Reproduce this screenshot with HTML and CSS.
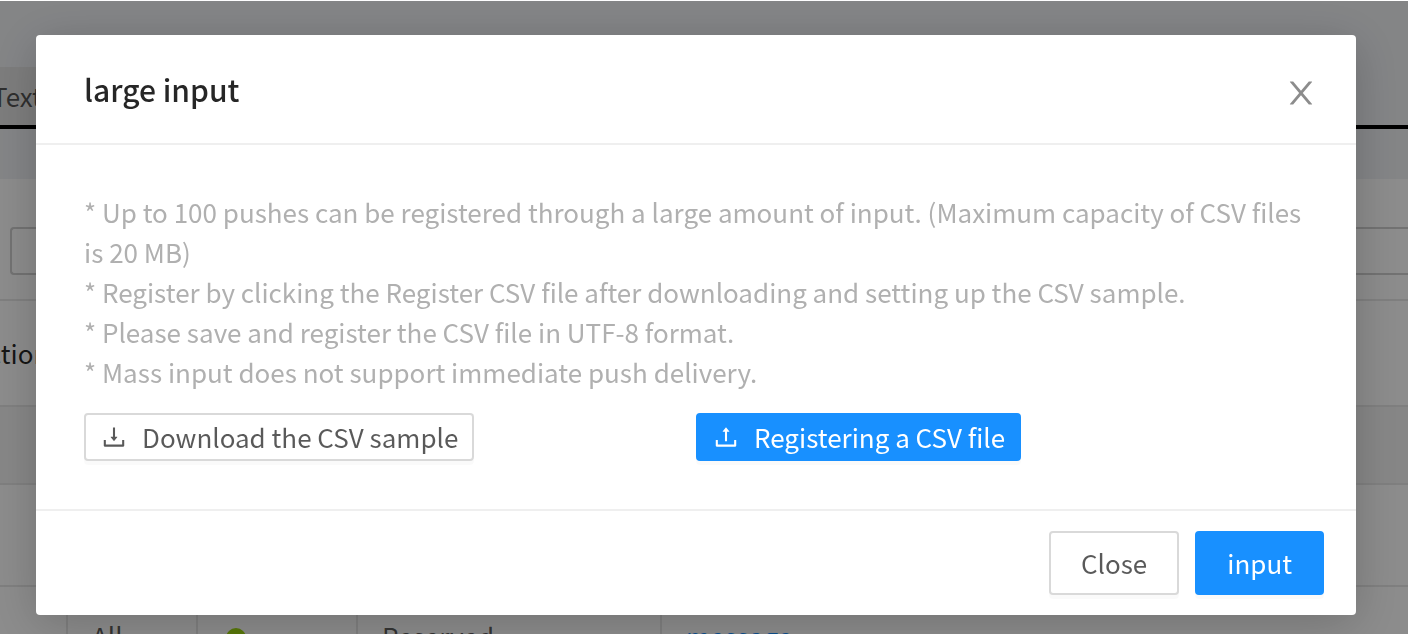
FILE: index.html
```html
<!DOCTYPE html>
<html lang="en">
<head>
<meta charset="utf-8">
<title>large input</title>
<link rel="stylesheet" href="styles.css">
</head>
<body>
<main class="page">
  <div class="topbar"></div>
  <nav class="tabs"><button class="tab" type="button">Text</button></nav>
  <div class="spacer"></div>
  <div class="search"><input class="search-input" type="text" aria-label="Search"></div>
  <div class="label-row">Action</div>
  <div class="head-row"></div>
  <div class="empty-row"></div>
  <table class="list">
    <tbody>
      <tr>
        <td class="col-check"></td>
        <td class="col-target">All</td>
        <td class="col-status"><span class="dot"></span></td>
        <td class="col-state">Reserved</td>
        <td><a class="link" href="#">message</a></td>
      </tr>
    </tbody>
  </table>
</main>

<div class="mask">
  <section class="modal" role="dialog" aria-modal="true" aria-labelledby="modal-title">
    <header class="modal-header">
      <h1 class="modal-title" id="modal-title">large input</h1>
      <button class="modal-close" type="button" aria-label="Dismiss">
        <svg class="close-icon" viewBox="0 0 1024 1024" aria-hidden="true"><path d="M563.8 512l262.5-312.9c4.4-5.2.7-13.1-6.1-13.1h-79.8c-4.7 0-9.2 2.1-12.3 5.7L511.6 449.8 295.1 191.7c-3-3.6-7.5-5.7-12.3-5.7H203c-6.8 0-10.5 7.9-6.1 13.1L459.4 512 196.9 824.9A7.95 7.95 0 0 0 203 838h79.8c4.7 0 9.2-2.1 12.3-5.7l216.5-258.1 216.5 258.1c3 3.6 7.5 5.7 12.3 5.7h79.8c6.8 0 10.5-7.9 6.1-13.1L563.8 512z"/></svg>
      </button>
    </header>
    <div class="modal-body">
      <div class="notes">
        <p class="note">* Up to 100 pushes can be registered through a large amount of input. (Maximum capacity of CSV files is 20 MB)</p>
        <p class="note">* Register by clicking the Register CSV file after downloading and setting up the CSV sample.</p>
        <p class="note">* Please save and register the CSV file in UTF-8 format.</p>
        <p class="note">* Mass input does not support immediate push delivery.</p>
      </div>
      <div class="actions">
        <button class="btn btn-small" type="button">
          <svg class="btn-icon" viewBox="0 0 1024 1024" aria-hidden="true"><path d="M505.7 661a8 8 0 0 0 12.6 0l112-141.7c4.1-5.2.4-12.9-6.3-12.9h-74.1V168c0-4.4-3.6-8-8-8h-60c-4.4 0-8 3.6-8 8v338.3H400c-6.7 0-10.4 7.7-6.3 12.9l112 141.8zM878 626h-60c-4.4 0-8 3.6-8 8v154H214V634c0-4.4-3.6-8-8-8h-60c-4.4 0-8 3.6-8 8v198c0 17.7 14.3 32 32 32h684c17.7 0 32-14.3 32-32V634c0-4.4-3.6-8-8-8z"/></svg>
          <span>Download the CSV sample</span>
        </button>
        <button class="btn btn-small btn-primary" type="button">
          <svg class="btn-icon" viewBox="0 0 1024 1024" aria-hidden="true"><path d="M400 317.7h73.9V656c0 4.4 3.6 8 8 8h60c4.4 0 8-3.6 8-8V317.7H624c6.7 0 10.4-7.7 6.3-12.9L518.3 163a8 8 0 0 0-12.6 0l-112 141.7c-4.1 5.3-.4 13 6.3 13zM878 626h-60c-4.4 0-8 3.6-8 8v154H214V634c0-4.4-3.6-8-8-8h-60c-4.4 0-8 3.6-8 8v198c0 17.7 14.3 32 32 32h684c17.7 0 32-14.3 32-32V634c0-4.4-3.6-8-8-8z"/></svg>
          <span>Registering a CSV file</span>
        </button>
      </div>
    </div>
    <footer class="modal-footer">
      <button class="btn" type="button">Close</button>
      <button class="btn btn-primary" type="button">input</button>
    </footer>
  </section>
</div>
</body>
</html>
```

FILE: styles.css
```css
* { box-sizing: border-box; }

body {
  margin: 0;
  height: 100vh;
  overflow: hidden;
  background: #fff;
  color: rgba(0, 0, 0, 0.65);
  font: 26px/40px "Noto Sans CJK KR", "Noto Sans CJK SC", sans-serif;
}

button, input { font: inherit; color: inherit; }

/* Page behind the dialog */
.page { height: 100%; padding-top: 1px; overflow: hidden; }
.topbar { height: 66px; background: #f0f2f5; }
.tabs {
  display: flex;
  height: 62px;
  background: #f0f2f5;
  border-bottom: 4px solid #000;
}
.tab {
  margin-left: -48px;
  padding: 0 40px;
  border: 0;
  background: #e4e4e4;
}
.spacer { height: 50px; background: #f0f2f5; }
.search {
  padding: 48px 0 24px 10px;
  border-bottom: 2px solid #e8e8e8;
}
.search-input {
  display: block;
  width: 100%;
  height: 48px;
  border: 2px solid #d0d0d0;
  border-right: 0;
  border-radius: 4px 0 0 4px;
  background: #fff;
}
.label-row {
  padding: 32px 0;
  text-indent: -28px;
  color: rgba(0, 0, 0, 0.85);
  border-bottom: 2px solid #e8e8e8;
}
.head-row { height: 78px; background: #f5f5f5; border-bottom: 2px solid #e8e8e8; }
.empty-row { height: 102px; border-bottom: 2px solid #e8e8e8; }
.list { width: 100%; border-collapse: collapse; table-layout: fixed; }
.list td { padding: 29px 24px; border-right: 2px solid #e8e8e8; }
.list td:last-child { border-right: 0; }
.col-check { width: 67px; }
.col-target { width: 130px; }
.col-status { width: 160px; }
.col-state { width: 304px; }
.dot {
  display: block;
  width: 20px;
  height: 20px;
  margin: 4px 0 0 4px;
  border-radius: 50%;
  background: #a0d911;
}
.link { color: #1890ff; text-decoration: none; }

/* Dialog */
.mask {
  position: fixed;
  inset: 1px 0 0;
  padding: 34px 52px 0 36px;
  background: rgba(0, 0, 0, 0.45);
}
.modal {
  background: #fff;
  border-radius: 4px;
  box-shadow: 0 8px 48px rgba(0, 0, 0, 0.2);
}
.modal-header {
  display: flex;
  align-items: flex-end;
  justify-content: space-between;
  padding: 32px 37px 32px 48px;
  border-bottom: 2px solid #efefef;
}
.modal-title {
  margin: 0;
  font-size: 30px;
  line-height: 44px;
  font-weight: 500;
  color: rgba(0, 0, 0, 0.85);
}
.modal-close {
  display: flex;
  padding: 0;
  border: 0;
  background: none;
  color: rgba(0, 0, 0, 0.45);
  cursor: pointer;
}
.close-icon { width: 36px; height: 36px; fill: currentColor; }
.modal-body { padding: 47px 48px 48px; }
.note { margin: 0; color: #b0b0b0; }
.actions {
  display: grid;
  grid-template-columns: 1fr 1fr;
  justify-items: start;
  margin-top: 21px;
}
.btn {
  display: inline-flex;
  align-items: center;
  gap: 14px;
  height: 64px;
  padding: 0 30px;
  border: 2px solid #d9d9d9;
  border-radius: 4px;
  background: #fff;
  box-shadow: 0 4px 0 rgba(0, 0, 0, 0.02);
  white-space: nowrap;
  cursor: pointer;
}
.btn-small { height: 48px; padding: 0 14px; }
.btn-primary { background: #1890ff; border-color: #1890ff; color: #fff; }
.btn-icon { width: 28px; height: 28px; fill: currentColor; }
.modal-footer {
  display: flex;
  justify-content: flex-end;
  gap: 16px;
  padding: 20px 32px;
  border-top: 2px solid #efefef;
}
```
